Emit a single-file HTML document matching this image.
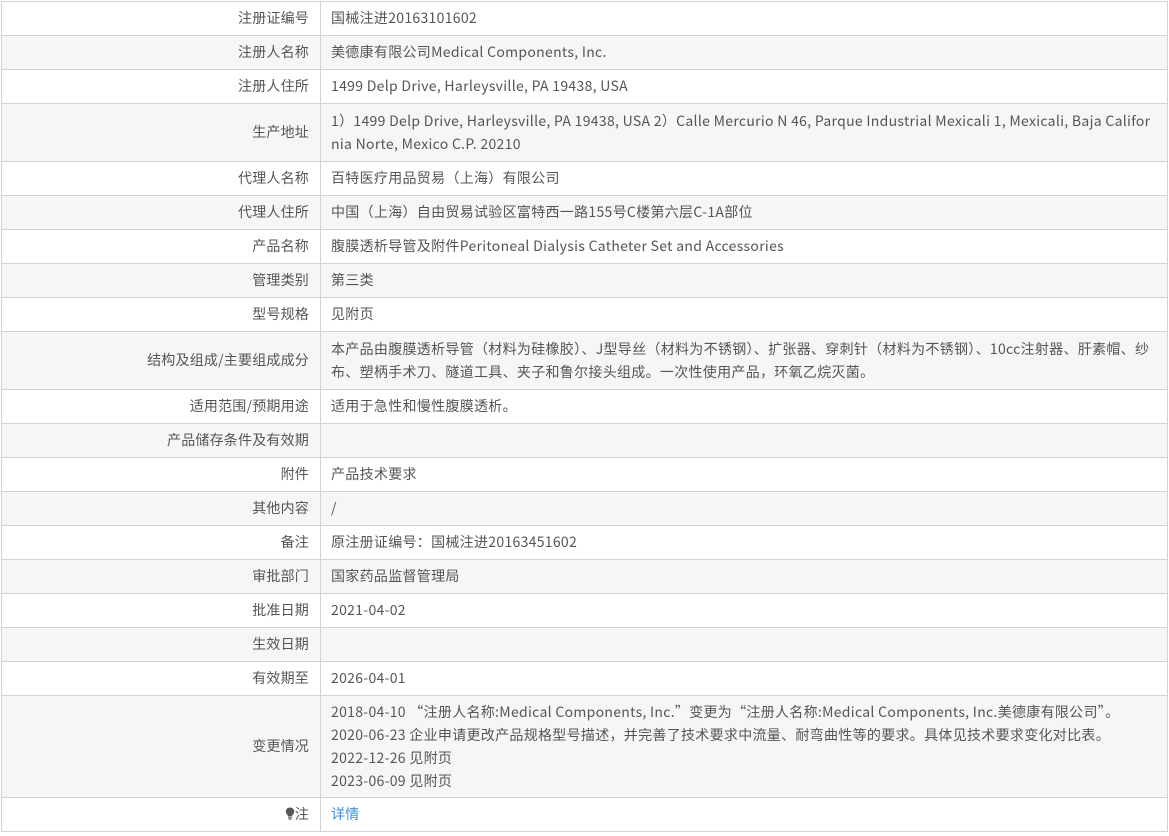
<!DOCTYPE html>
<html><head><meta charset="utf-8"><style>
body{margin:0;background:#fff;}
table{position:absolute;left:1px;top:1px;width:1167px;border-collapse:collapse;table-layout:fixed;font-family:"Noto Sans CJK SC","Liberation Sans",sans-serif;font-size:14px;color:#555;letter-spacing:0.3px;}
td{border:1px solid #d2d2d2;padding:0 10px;line-height:23px;word-break:break-all;}
td.l{width:297px;text-align:right;padding-right:11px;letter-spacing:0.2px;}
tr:nth-child(even){background:#f6f6f6;}
tr{height:34px;}
tr.t2{height:58px;}
tr.t4{height:102px;}
a{color:#3c8dde;text-decoration:none;}
</style></head><body>
<table>
<tr><td class="l">注册证编号</td><td>国械注进20163101602</td></tr>
<tr><td class="l">注册人名称</td><td>美德康有限公司Medical Components, Inc.</td></tr>
<tr><td class="l">注册人住所</td><td>1499 Delp Drive, Harleysville, PA 19438, USA</td></tr>
<tr class="t2"><td class="l">生产地址</td><td>1）1499 Delp Drive, Harleysville, PA 19438, USA 2）Calle Mercurio N 46, Parque Industrial Mexicali 1, Mexicali, Baja California Norte, Mexico C.P. 20210</td></tr>
<tr><td class="l">代理人名称</td><td>百特医疗用品贸易（上海）有限公司</td></tr>
<tr><td class="l">代理人住所</td><td>中国（上海）自由贸易试验区富特西一路155号C楼第六层C-1A部位</td></tr>
<tr><td class="l">产品名称</td><td>腹膜透析导管及附件Peritoneal Dialysis Catheter Set and Accessories</td></tr>
<tr><td class="l">管理类别</td><td>第三类</td></tr>
<tr><td class="l">型号规格</td><td>见附页</td></tr>
<tr class="t2"><td class="l">结构及组成/主要组成成分</td><td>本产品由腹膜透析导管（材料为硅橡胶）、J型导丝（材料为不锈钢）、扩张器、穿刺针（材料为不锈钢）、10cc注射器、肝素帽、纱布、塑柄手术刀、隧道工具、夹子和鲁尔接头组成。一次性使用产品，环氧乙烷灭菌。</td></tr>
<tr><td class="l">适用范围/预期用途</td><td>适用于急性和慢性腹膜透析。</td></tr>
<tr><td class="l">产品储存条件及有效期</td><td></td></tr>
<tr><td class="l">附件</td><td>产品技术要求</td></tr>
<tr><td class="l">其他内容</td><td>/</td></tr>
<tr><td class="l">备注</td><td>原注册证编号：国械注进20163451602</td></tr>
<tr><td class="l">审批部门</td><td>国家药品监督管理局</td></tr>
<tr><td class="l">批准日期</td><td>2021-04-02</td></tr>
<tr><td class="l">生效日期</td><td></td></tr>
<tr><td class="l">有效期至</td><td>2026-04-01</td></tr>
<tr class="t4"><td class="l">变更情况</td><td>2018-04-10 “注册人名称:Medical Components, Inc.”变更为“注册人名称:Medical Components, Inc.美德康有限公司”。<br>2020-06-23 企业申请更改产品规格型号描述，并完善了技术要求中流量、耐弯曲性等的要求。具体见技术要求变化对比表。<br>2022-12-26 见附页<br>2023-06-09 见附页</td></tr>
<tr><td class="l"><svg width="10" height="13" viewBox="0 0 10 13" style="vertical-align:-1px"><path d="M5 0.5C2.5 0.5 0.8 2.3 0.8 4.6c0 1.6 1 2.6 1.7 3.4.4.5.5 1 .5 1.5h4c0-.5.1-1 .5-1.5.7-.8 1.7-1.8 1.7-3.4C9.2 2.3 7.5.5 5 .5zM3 10.3h4v1.2H3zM3.8 12h2.4v.8H3.8z" fill="#555"/></svg>注</td><td><a>详情</a></td></tr>
</table>
</body></html>
